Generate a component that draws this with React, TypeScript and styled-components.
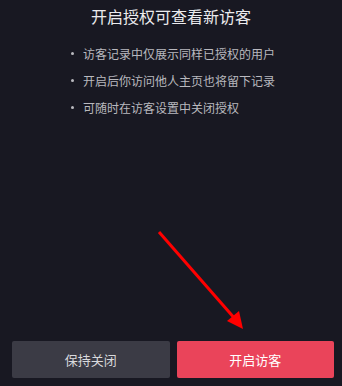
import React from 'react'
import styled, { createGlobalStyle } from 'styled-components'

const GlobalStyle = createGlobalStyle`
	html, body {
		margin: 0;
		padding: 0;
		background: #181822;
	}
	* {
		box-sizing: border-box;
	}
`

const Page = styled.main`
	position: relative;
	width: 342px;
	height: 386px;
	display: flex;
	flex-direction: column;
	background: #181822;
	font-family: 'Noto Sans CJK SC', 'Noto Sans', sans-serif;
	overflow: hidden;
`

const Title = styled.h1`
	margin: 5px 0 0;
	font-size: 16px;
	line-height: 22px;
	font-weight: 400;
	text-align: center;
	color: #ebebee;
`

const Tips = styled.ul`
	list-style: none;
	margin: 13px 0 0;
	padding: 0 0 0 83px;

	li {
		position: relative;
		font-size: 12px;
		line-height: 27px;
		color: #b9b9bf;
	}

	li::before {
		content: '';
		position: absolute;
		left: -12px;
		top: 12px;
		width: 3px;
		height: 3px;
		border-radius: 50%;
		background: #b9b9bf;
	}
`

const Footer = styled.div`
	margin-top: auto;
	display: flex;
	gap: 7px;
	padding: 0 8px 8px 12px;
`

const Button = styled.button<{ $primary?: boolean }>`
	flex: 1;
	height: 37px;
	border: none;
	border-radius: 2px;
	font-family: inherit;
	font-size: 13px;
	color: ${({ $primary }) => ($primary ? '#ffffff' : '#d9d9dc')};
	background: ${({ $primary }) => ($primary ? '#ea445a' : '#3b3b45')};
`

const Arrow = styled.svg`
	position: absolute;
	left: 0;
	top: 0;
	pointer-events: none;
`

const tips = ['访客记录中仅展示同样已授权的用户', '开启后你访问他人主页也将留下记录', '可随时在访客设置中关闭授权']

export default function App() {
	return (
		<>
			<GlobalStyle />
			<Page>
				<Title>开启授权可查看新访客</Title>
				<Tips>
					{tips.map((tip) => (
						<li key={tip}>{tip}</li>
					))}
				</Tips>
				<Footer>
					<Button>保持关闭</Button>
					<Button $primary>开启访客</Button>
				</Footer>
				<Arrow width="342" height="386" viewBox="0 0 342 386">
					<line x1="159" y1="232" x2="236" y2="320" stroke="#ff0000" strokeWidth="3" />
					<polygon points="243,329 227,321 239,311" fill="#ff0000" />
				</Arrow>
			</Page>
		</>
	)
}
